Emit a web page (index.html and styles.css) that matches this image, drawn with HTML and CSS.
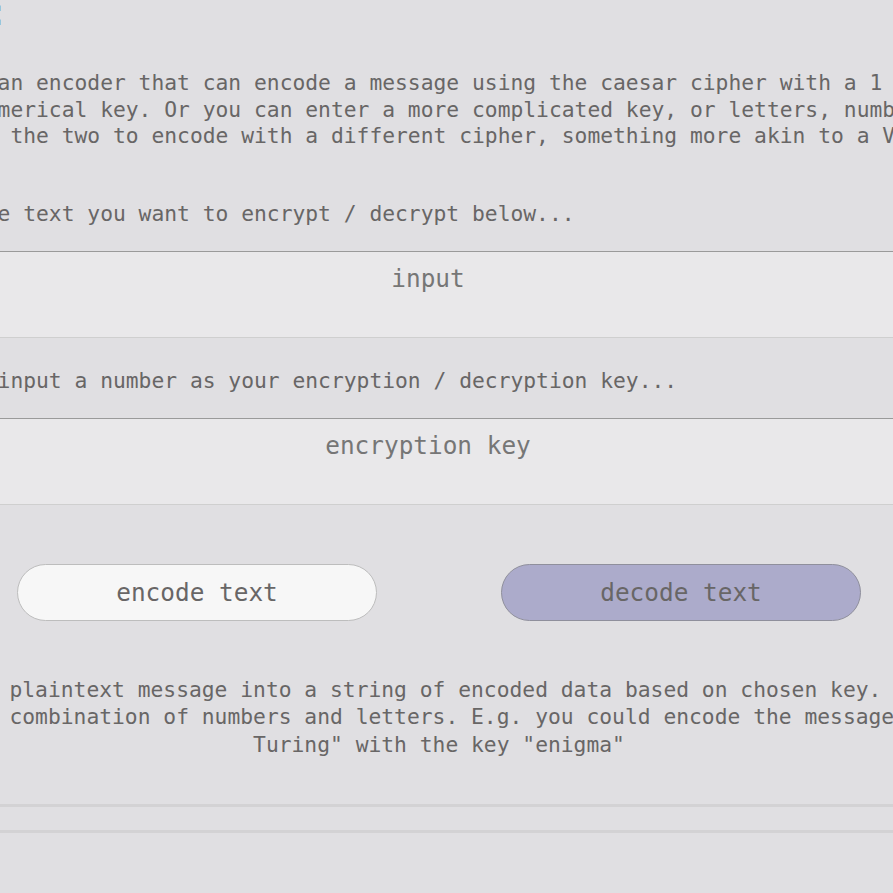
FILE: index.html
```html
<!DOCTYPE html>
<html lang="en">
<head>
<meta charset="utf-8">
<title>Cipher encoder</title>
<link rel="stylesheet" href="styles.css">
</head>
<body>
<main class="page">
  <h1 class="title">Code:</h1>
  <p class="intro">This is an encoder that can encode a message using the caesar cipher with a 1<br>digit numerical key. Or you can enter a more complicated key, or letters, numbers or<br>a mix of the two to encode with a different cipher, something more akin to a Vigenère cipher.</p>
  <p class="prompt">Enter the text you want to encrypt / decrypt below...</p>
  <textarea class="field" placeholder="input"></textarea>
  <p class="prompt">Second, input a number as your encryption / decryption key...</p>
  <textarea class="field" placeholder="encryption key"></textarea>
  <div class="actions">
    <button class="btn btn-encode" type="button">encode text</button>
    <button class="btn btn-decode" type="button">decode text</button>
  </div>
  <p class="help">Turns a plaintext message into a string of encoded data based on chosen key. It can<br>use any combination of numbers and letters. E.g. you could encode the message "Alan<br>Turing" with the key "enigma"</p>
  <div class="output"></div>
</main>
</body>
</html>
```

FILE: styles.css
```css
html, body {
  margin: 0;
  overflow: hidden;
}

body {
  background: #e0dfe2;
  color: #686666;
  font-family: "DejaVu Sans Mono", "Liberation Mono", monospace;
  display: flex;
  justify-content: center;
  padding-right: 15px;
}

.page {
  flex: none;
  width: 1088px;
}

.title {
  margin: 2px 0 0;
  font-size: 38px;
  line-height: 20px;
  font-weight: normal;
  color: #7189a9;
}

.intro,
.prompt,
.help {
  font-size: 21.3px;
  line-height: 26.7px;
  white-space: nowrap;
}

.intro {
  margin: 48px 0 51px;
}

.prompt {
  margin: 0 0 23px;
}

.field {
  display: block;
  box-sizing: border-box;
  width: 100%;
  height: 87px;
  margin: 0 0 30px;
  padding: 12px 22px 0 0;
  border: 0;
  border-top: 1px solid #9a9a9a;
  border-bottom: 1px solid #cfcfcf;
  background: #e9e8ea;
  font-family: "DejaVu Sans Mono", "Liberation Mono", monospace;
  font-size: 24.4px;
  color: #686666;
  text-align: center;
  resize: none;
  outline: none;
}

.field::placeholder {
  color: #767676;
  opacity: 1;
}

.actions {
  display: flex;
  justify-content: center;
  gap: 124px;
  margin-top: 59px;
}

.btn {
  box-sizing: border-box;
  width: 360px;
  height: 57px;
  padding: 0;
  border-radius: 29px;
  font-family: "DejaVu Sans Mono", "Liberation Mono", monospace;
  font-size: 24.4px;
  color: #686666;
}

.btn-encode {
  background: #f7f7f7;
  border: 1px solid #bdbdbd;
}

.btn-decode {
  background: #acabcb;
  border: 1px solid #8f8f9c;
}

.help {
  margin: 55px 0 0;
  line-height: 27.5px;
  text-align: center;
}

.output {
  margin-top: 46px;
  height: 23px;
  border-top: 3px solid #d3d2d4;
  border-bottom: 3px solid #d3d2d4;
}
```
